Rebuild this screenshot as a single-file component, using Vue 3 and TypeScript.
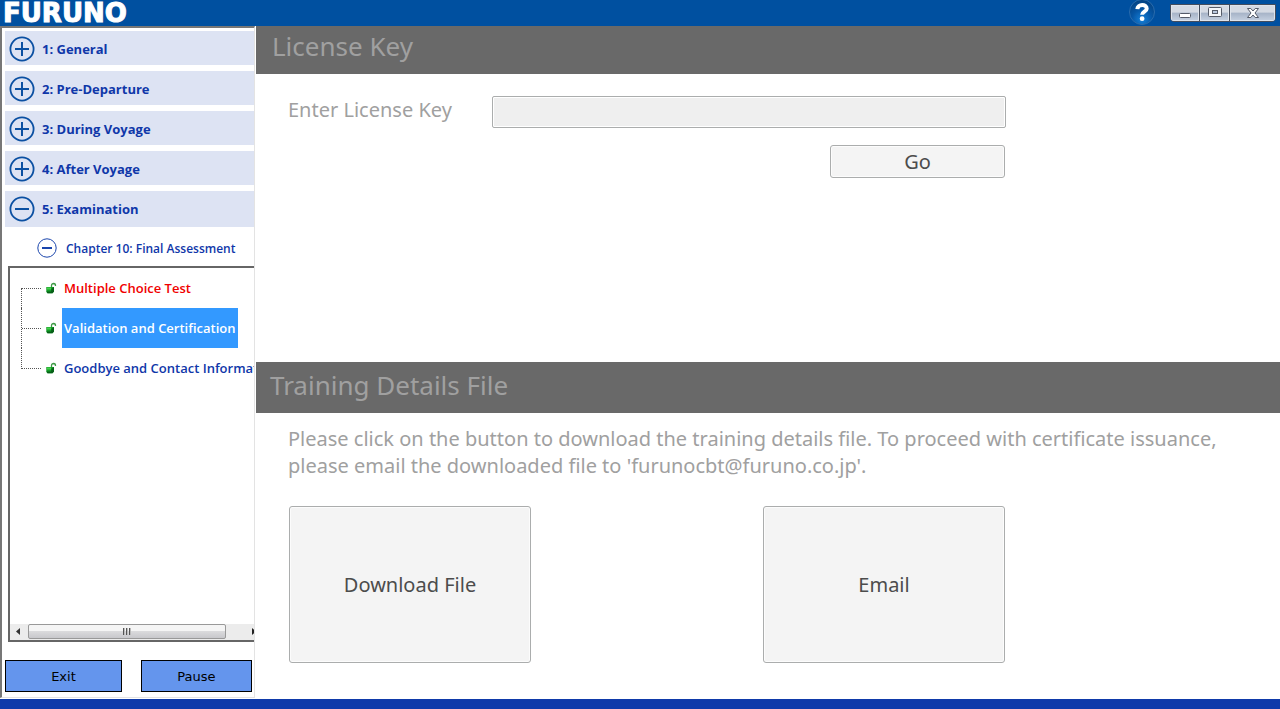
<script setup lang="ts">
import { ref } from 'vue'

interface Topic {
  title: string
  state: 'done' | 'current' | 'open'
}

const sections = ['1: General', '2: Pre-Departure', '3: During Voyage', '4: After Voyage', '5: Examination']
const expanded = 4
const topics: Topic[] = [
  { title: 'Multiple Choice Test', state: 'done' },
  { title: 'Validation and Certification', state: 'current' },
  { title: 'Goodbye and Contact Information', state: 'open' },
]
const licenseKey = ref('')
</script>

<template>
  <div class="window">
    <header class="titlebar">
      <span class="brand">FURUNO</span>
      <div class="tools">
        <button class="help" aria-label="Help">
          <svg width="26" height="26" viewBox="0 0 26 26">
            <defs>
              <radialGradient id="ball" cx="50%" cy="80%" r="80%">
                <stop offset="0" stop-color="#1580d8" />
                <stop offset="0.5" stop-color="#0656a5" />
                <stop offset="1" stop-color="#04417f" />
              </radialGradient>
            </defs>
            <circle cx="13" cy="12" r="12.5" fill="url(#ball)" stroke="#2a6cad" />
            <path d="M8.3 9.200C8.600 3.800 17.800 3.900 17.700 8.600C17.600 11.800 13.200 11.600 13.100 14.800" fill="none" stroke="#fff" stroke-width="4" />
            <circle cx="13.1" cy="18.700" r="2.400" fill="#fff" />
          </svg>
        </button>
        <div class="controls">
          <button aria-label="Minimize">
            <svg width="14" height="12" viewBox="0 0 14 12"><rect x="1.500" y="6.500" width="11" height="4" rx="1" fill="#fff" stroke="#555b68" /></svg>
          </button>
          <button aria-label="Restore">
            <svg width="14" height="12" viewBox="0 0 14 12">
              <rect x="0.500" y="0.500" width="13" height="9" rx="1" fill="#f4f6fa" stroke="#555b68" />
              <rect x="4.500" y="3.500" width="5" height="3" fill="#b9c8de" stroke="#555b68" />
            </svg>
          </button>
          <button class="close" aria-label="Close">
            <svg width="14" height="12" viewBox="0 0 14 12">
              <path d="M1.500 1.500H4.800L7 4L9.200 1.500H12.500L9 6L12.500 10.500H9.200L7 8L4.800 10.500H1.500L5 6Z" fill="#fff" stroke="#555b68" />
            </svg>
          </button>
        </div>
      </div>
    </header>

    <div class="workspace">
      <aside class="sidebar">
        <nav class="sections">
          <button v-for="(name, i) in sections" :key="name" class="section" :class="{ expanded: i === expanded }">
            <svg width="26" height="26" viewBox="0 0 26 26" fill="none" stroke="#0b50a2">
              <circle cx="13" cy="13" r="11.6" stroke-width="1.800" />
              <path :d="i === expanded ? 'M6 13H20' : 'M6 13H20M13 6V20'" stroke-width="2" />
            </svg>
            <span>{{ name }}</span>
          </button>
        </nav>
        <button class="chapter">
          <svg width="20" height="20" viewBox="0 0 20 20" fill="none" stroke="#1a45ac">
            <circle cx="10" cy="10" r="9.200" />
            <path d="M5 10H15" stroke-width="2" />
          </svg>
          <span>Chapter 10: Final Assessment</span>
        </button>
        <div class="tree">
          <ul class="topics">
            <li v-for="topic in topics" :key="topic.title" :class="topic.state">
              <span class="branch"></span>
              <svg width="11" height="12" viewBox="0 0 11 12">
                <path d="M5.500 6V3.500Q5.700 1.500 7.700 1.500Q9.600 1.600 9.500 4" fill="none" stroke="#3f9b48" stroke-width="1.300" />
                <path d="M0.300 5H8V9.500L6.500 11.200H1.500L0.300 10Z" fill="#129b25" />
                <path d="M5.500 7L8 5V9.500L6.500 11.200H1.500L0.600 9.500H5Z" fill="#075f18" />
                <path d="M1 5.500H5V7.500H1Z" fill="#44d04c" />
              </svg>
              <a href="#">{{ topic.title }}</a>
            </li>
          </ul>
          <div class="scrollbar">
            <svg width="18" height="15" viewBox="0 0 18 15"><path d="M10 4V11L6 7.500Z" fill="#333" /></svg>
            <div class="thumb"><i></i><i></i><i></i></div>
            <svg class="next" width="3" height="15" viewBox="0 0 3 15"><path d="M1 4V11L5 7.500Z" fill="#222" /></svg>
          </div>
        </div>
        <div class="actions">
          <button>Exit</button>
          <button>Pause</button>
        </div>
      </aside>

      <main class="content">
        <h1 class="heading">License Key</h1>
        <form class="license" @submit.prevent>
          <div class="field">
            <label for="license-key">Enter License Key</label>
            <input id="license-key" v-model="licenseKey" type="text" />
          </div>
          <button class="plain go" type="submit">Go</button>
        </form>
        <h2 class="heading details">Training Details File</h2>
        <section class="training">
          <p>Please click on the button to download the training details file. To proceed with certificate issuance, please email the downloaded file to 'furunocbt@furuno.co.jp'.</p>
          <div class="choices">
            <button class="plain">Download File</button>
            <button class="plain">Email</button>
          </div>
        </section>
      </main>
    </div>
    <footer class="base"></footer>
  </div>
</template>

<style>
body {
  margin: 0;
}
</style>

<style scoped>
.window {
  display: flex;
  flex-direction: column;
  min-height: 100vh;
  background: #fff;
  font-family: "Trebuchet MS", "Open Sans", "Noto Sans", sans-serif;
}
.window *,
.window {
  box-sizing: border-box;
}
button {
  margin: 0;
  padding: 0;
  border: 0;
  background: none;
  font: inherit;
  color: inherit;
}
svg {
  display: block;
  flex: none;
}
.titlebar {
  display: flex;
  justify-content: space-between;
  height: 26px;
  padding: 0 4px 0 3px;
  background: #0050a0;
}
.brand {
  color: #fff;
  font: 700 26px/27px "DejaVu Sans", sans-serif;
  -webkit-text-stroke: 1px #fff;
}
.tools {
  display: flex;
  gap: 15px;
}
.controls {
  display: flex;
  height: 18px;
  margin-top: 4px;
  border: 1px solid #454d5c;
  border-radius: 0 0 4px 4px;
  overflow: hidden;
}
.controls button {
  display: flex;
  align-items: center;
  justify-content: center;
  width: 28px;
  background: linear-gradient(#d5dae3 0 45%, #a6b3c7 50%, #c6d1e1);
  box-shadow: inset 0 0 0 1px #dfe4ec;
}
.controls button + button {
  width: 30px;
  border-left: 1px solid #454d5c;
}
.controls .close.close {
  width: 46px;
}
.workspace {
  display: flex;
  flex: 1;
}
.sidebar {
  display: flex;
  flex: none;
  flex-direction: column;
  width: 255px;
  margin-right: 1px;
  margin-bottom: 1px;
  padding: 3px 0 5px 3px;
  border: 1px solid #e3e3e3;
  border-top: 2px solid #777;
  border-left: 2px solid #777;
  color: #0f37a9;
}
.sections {
  display: grid;
  gap: 6px;
}
.section {
  display: flex;
  align-items: center;
  gap: 7px;
  height: 34px;
  padding: 2px 0 0 4px;
  background: #dde3f3;
  font-size: 13px;
  font-weight: 700;
}
.expanded {
  height: 36px;
  padding-top: 0;
}
.chapter {
  display: flex;
  align-items: center;
  gap: 9px;
  height: 39px;
  padding: 3px 0 0 32px;
  font-size: 12px;
  font-weight: 600;
  white-space: nowrap;
}
.tree {
  display: flex;
  flex: 1;
  flex-direction: column;
  justify-content: space-between;
  margin-left: 3px;
  border: 2px solid #666;
  border-right: 0;
  overflow: hidden;
}
.topics {
  margin: 0;
  padding: 0 0 0 11px;
  list-style: none;
  font-size: 13px;
  font-weight: 600;
}
.topics li {
  display: flex;
  align-items: center;
  height: 40px;
  white-space: nowrap;
}
.branch {
  flex: none;
  align-self: stretch;
  width: 21px;
  margin-right: 4px;
  border-left: 1px dotted #555;
  background: repeating-linear-gradient(90deg, #555 0 1px, transparent 1px 2px) 0 20px / 100% 1px no-repeat;
}
.topics li:first-child .branch {
  height: 20px;
  align-self: flex-end;
  background-position: 0 0;
}
.topics li:last-child .branch {
  height: 21px;
  align-self: flex-start;
}
.topics a {
  margin-left: 5px;
  padding: 0 2px;
  color: inherit;
  line-height: 40px;
  text-decoration: none;
}
.done {
  color: #f00000;
}
.current a {
  background: #3399ff;
  color: #fff;
}
.scrollbar {
  display: flex;
  height: 16px;
  background: #ececec;
}
.thumb {
  display: flex;
  flex: 1;
  align-items: center;
  justify-content: center;
  gap: 1px;
  height: 15px;
  border: 1px solid #999;
  border-radius: 2px;
  background: linear-gradient(#f5f5f5 0 45%, #dadadc 50%, #c8c8cc);
}
.thumb i {
  width: 2px;
  height: 7px;
  background: linear-gradient(90deg, #555 50%, #bbb 50%);
}
.next {
  margin-left: 25px;
}
.actions {
  display: flex;
  gap: 19px;
  margin: 18px 2px 0 0;
}
.actions button {
  flex: 117;
  height: 32px;
  border: 1px solid #000;
  background: #6495ed;
  color: #000;
  font: 13px "DejaVu Sans", sans-serif;
}
.actions button + button {
  flex: 111;
}
.content {
  flex: 1;
  min-width: 0;
  color: #a0a0a0;
  font-family: "Trebuchet MS", "Noto Sans", "Open Sans", sans-serif;
  font-size: 20px;
}
.heading {
  height: 48px;
  margin: 0;
  padding-left: 16px;
  background: #696969;
  font-size: 26px;
  font-weight: 400;
  line-height: 40px;
}
.details {
  height: 51px;
  padding-left: 14px;
  line-height: 46px;
}
.license {
  display: flex;
  flex-direction: column;
  align-items: flex-end;
  gap: 17px;
  max-width: 750px;
  height: 288px;
  padding: 22px 0 0 32px;
}
.field {
  display: flex;
  align-self: stretch;
  justify-content: space-between;
  line-height: 28px;
}
.field input {
  width: 514px;
  height: 32px;
  padding: 0 8px;
  border: 1px solid #abadad;
  border-radius: 2px;
  background: #efefef;
  box-shadow: inset 0 0 0 1px #fff;
  font: inherit;
}
.plain {
  border: 1px solid #abadad;
  border-radius: 3px;
  background: #f4f4f4;
  box-shadow: inset 0 0 0 1px #fcfcfc;
  color: #4c4c4c;
}
.go {
  width: 175px;
  height: 33px;
  margin-right: 1px;
}
.training {
  padding: 12px 32px 36px;
}
.training p {
  margin: 0 0 27px;
  line-height: 27px;
}
.choices {
  display: flex;
  justify-content: space-between;
  max-width: 717px;
  padding-left: 1px;
}
.choices button {
  width: 242px;
  height: 157px;
}
.base {
  height: 10px;
  background: #0f3aaa;
}
</style>
